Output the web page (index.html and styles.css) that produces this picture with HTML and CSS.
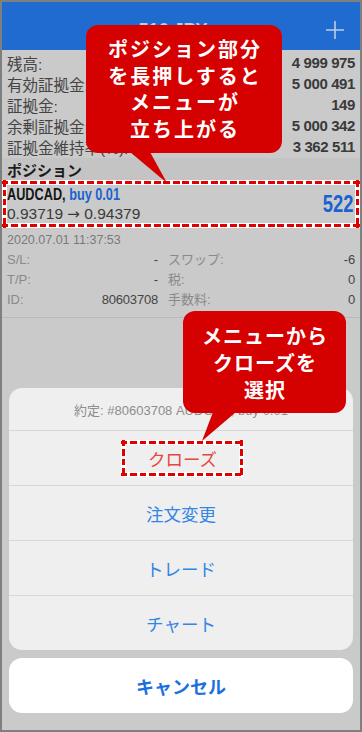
FILE: index.html
```html
<!DOCTYPE html>
<html lang="ja">
<head>
<meta charset="utf-8">
<title>ポジション</title>
<link rel="stylesheet" href="styles.css">
</head>
<body>
<div class="screen">
  <header class="topbar">
    <span></span>
    <div class="title">516 JPY</div>
    <svg class="plus" width="18" height="18" viewBox="0 0 18 18"><path d="M9 0V18M0 9H18" stroke="#bccde6" stroke-width="1.6" fill="none"/></svg>
  </header>

  <section class="summary">
    <div class="row"><span>残高:</span><span class="val">4 999 975</span></div>
    <div class="row"><span>有効証拠金:</span><span class="val">5 000 491</span></div>
    <div class="row"><span>証拠金:</span><span class="val">149</span></div>
    <div class="row"><span>余剰証拠金:</span><span class="val">5 000 342</span></div>
    <div class="row"><span>証拠金維持率(%):</span><span class="val">3 362 511</span></div>
  </section>

  <div class="section-title">ポジション</div>

  <div class="position dashed">
    <div class="pos-main">
      <div class="pos-line1"><span class="narrow"><span class="sym">AUDCAD,</span> <span class="side">buy 0.01</span></span></div>
      <div class="pos-line2">0.93719 <span class="arrow">→</span> 0.94379</div>
    </div>
    <div class="profit"><span class="narrow-r">522</span></div>
  </div>

  <div class="details">
    <div class="date">2020.07.01 11:37:53</div>
    <div class="grid">
      <div class="cell"><span class="lbl">S/L:</span><span class="v">-</span></div>
      <div class="cell"><span class="lbl">スワップ:</span><span class="v">-6</span></div>
      <div class="cell"><span class="lbl">T/P:</span><span class="v">-</span></div>
      <div class="cell"><span class="lbl">税:</span><span class="v">0</span></div>
      <div class="cell"><span class="lbl">ID:</span><span class="v">80603708</span></div>
      <div class="cell"><span class="lbl">手数料:</span><span class="v">0</span></div>
    </div>
  </div>

  <div class="sheet-wrap">
    <div class="sheet">
      <div class="sheet-title">約定: #80603708 AUDCAD, buy 0.01</div>
      <div class="sheet-item danger"><span class="close-mark dashed">クローズ</span></div>
      <div class="sheet-item">注文変更</div>
      <div class="sheet-item">トレード</div>
      <div class="sheet-item">チャート</div>
    </div>
    <div class="cancel">キャンセル</div>
  </div>

  <div class="callout callout-1">ポジション部分<br>を長押しすると<br>メニューが<br>立ち上がる</div>
  <div class="callout callout-2">メニューから<br>クローズを<br>選択</div>
</div>
</body>
</html>
```

FILE: styles.css
```css
html, body {
  margin: 0;
  padding: 0;
}

.screen {
  width: 362px;
  height: 732px;
  box-sizing: border-box;
  border: 2px solid #7f7f7f;
  background: #cacaca;
  position: relative;
  overflow: hidden;
  font-family: "Liberation Sans", "Noto Sans CJK JP", sans-serif;
}

.topbar {
  height: 48px;
  box-sizing: border-box;
  padding: 8px 16px 0 0;
  background: #1f6bcf;
  display: grid;
  grid-template-columns: 1fr auto 1fr;
  align-items: center;
}

.title {
  color: #bccde6;
  font-weight: bold;
  font-size: 18px;
}

.plus {
  justify-self: end;
}

.summary {
  padding: 2px 5px 1px 5px;
  color: #444444;
  font-size: 15.5px;
}

.summary .row {
  height: 21px;
  display: flex;
  justify-content: space-between;
  align-items: center;
}

.val {
  font-weight: bold;
  font-size: 15px;
  letter-spacing: -0.4px;
  color: #3a3a3a;
}

.section-title {
  height: 22px;
  box-sizing: border-box;
  background: #c4c4c4;
  display: flex;
  align-items: center;
  padding: 0 5px;
  font-weight: bold;
  font-size: 15px;
  color: #1c1c1c;
}

.dashed {
  box-sizing: border-box;
  border: 5px solid transparent;
  --dash: #e00000;
}

.position {
  height: 48px;
  display: flex;
  justify-content: space-between;
  align-items: center;
  padding-right: 2px;
  background:
    repeating-linear-gradient(90deg, var(--dash) 0 6.5px, transparent 6.5px 9.5px) left 0 top 1px / 100% 3px no-repeat border-box,
    repeating-linear-gradient(90deg, var(--dash) 0 6.5px, transparent 6.5px 9.5px) left 0 bottom 1px / 100% 3px no-repeat border-box,
    repeating-linear-gradient(180deg, var(--dash) 0 6.5px, transparent 6.5px 9.5px) left 1px top 0 / 3px 100% no-repeat border-box,
    repeating-linear-gradient(180deg, var(--dash) 0 6.5px, transparent 6.5px 9.5px) right 1px top 0 / 3px 100% no-repeat border-box,
    linear-gradient(#cacaca, #cacaca) padding-box,
    #ffffff;
}

.pos-line1 {
  line-height: 19px;
  font-weight: bold;
  font-size: 16.5px;
  color: #151515;
  white-space: nowrap;
}

.narrow {
  display: inline-block;
  transform: scaleX(0.77);
  transform-origin: left center;
}

.side {
  color: #1a62d0;
}

.pos-line2 {
  line-height: 19px;
  font-size: 15.5px;
  color: #3a3a3a;
}

.arrow {
  font-family: "DejaVu Sans", sans-serif;
  font-size: 15px;
}

.profit {
  font-weight: bold;
  font-size: 23px;
  color: #1a62d0;
}

.narrow-r {
  display: inline-block;
  transform: scaleX(0.8);
  transform-origin: right center;
}

.details {
  padding: 2px 5px 7px 5px;
  border-bottom: 1px solid #b9b9b9;
}

.date {
  line-height: 20px;
  font-size: 12.5px;
  color: #7a7a7a;
}

.grid {
  display: grid;
  grid-template-columns: 151px 1fr;
  column-gap: 10px;
}

.cell {
  line-height: 20px;
  display: flex;
  justify-content: space-between;
  font-size: 13px;
}

.lbl {
  color: #898989;
}

.v {
  color: #454545;
  letter-spacing: -0.2px;
}

.sheet-wrap {
  position: absolute;
  left: 7px;
  right: 7px;
  bottom: 17px;
  display: flex;
  flex-direction: column;
  gap: 8px;
}

.sheet {
  background: #efefef;
  border-radius: 13px;
  overflow: hidden;
}

.sheet-title {
  height: 42px;
  display: flex;
  align-items: center;
  justify-content: center;
  font-size: 13px;
  color: #8d8d8d;
}

.sheet-item {
  height: 55px;
  box-sizing: border-box;
  border-top: 1px solid #d7d7d7;
  display: flex;
  align-items: center;
  justify-content: center;
  font-size: 17.5px;
  color: #3385e6;
}

.sheet-item.danger {
  color: #e8473d;
}

.close-mark {
  width: 123px;
  height: 37px;
  margin-left: 3px;
  display: flex;
  align-items: center;
  justify-content: center;
  background:
    repeating-linear-gradient(90deg, var(--dash) 0 6.5px, transparent 6.5px 9.5px) left 0 top 1px / 100% 3px no-repeat border-box,
    repeating-linear-gradient(90deg, var(--dash) 0 6.5px, transparent 6.5px 9.5px) left 0 bottom 1px / 100% 3px no-repeat border-box,
    repeating-linear-gradient(180deg, var(--dash) 0 6.5px, transparent 6.5px 9.5px) left 1px top 0 / 3px 100% no-repeat border-box,
    repeating-linear-gradient(180deg, var(--dash) 0 6.5px, transparent 6.5px 9.5px) right 1px top 0 / 3px 100% no-repeat border-box,
    linear-gradient(#efefef, #efefef) padding-box,
    #ffffff;
}

.cancel {
  height: 55px;
  background: #ffffff;
  border-radius: 13px;
  display: flex;
  align-items: center;
  justify-content: center;
  font-weight: bold;
  font-size: 18px;
  color: #1b6fe0;
}

.callout {
  position: absolute;
  box-sizing: border-box;
  background: #d50000;
  color: #ffffff;
  border-radius: 12px;
  font-family: "Noto Sans CJK JP", sans-serif;
  font-weight: bold;
  font-size: 20px;
  text-align: center;
  z-index: 2;
}

.callout::after {
  content: "";
  position: absolute;
  background: #d50000;
}

.callout-1 {
  left: 84px;
  top: 23px;
  width: 196px;
  height: 128px;
  padding: 11px 0 0 2px;
  line-height: 26.5px;
  letter-spacing: 2px;
}

.callout-1::after {
  left: 44px;
  top: 127px;
  width: 37px;
  height: 31px;
  clip-path: polygon(0 0, 20px 0, 100% 100%);
}

.callout-2 {
  left: 181px;
  top: 309px;
  width: 163px;
  height: 102px;
  padding: 10.5px 0 0 1px;
  line-height: 27px;
  letter-spacing: 1px;
}

.callout-2::after {
  left: 19px;
  top: 101px;
  width: 34px;
  height: 29px;
  clip-path: polygon(11px 0, 100% 0, 0 100%);
}
```
